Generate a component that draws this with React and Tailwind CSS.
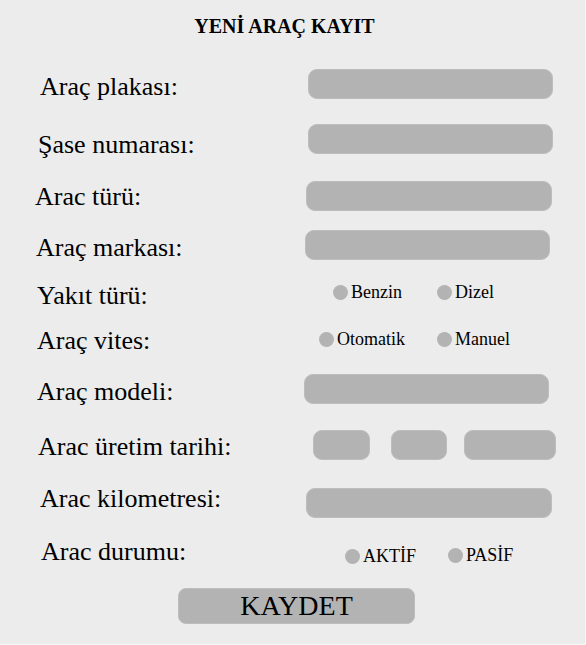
import React from "react";

const field = "h-[30px] shrink-0 rounded-[9px] border border-[#bdbdbd] bg-[#b3b3b3]";

function Row({ className = "", labelClass = "", label, children }) {
  return (
    <div className={`flex h-[30px] items-center ${className}`}>
      <div className={`shrink-0 whitespace-nowrap font-['Liberation_Serif',serif] text-[26px] leading-[30px] ${labelClass}`}>
        {label}
      </div>
      {children}
    </div>
  );
}

function Radio({ label, className = "" }) {
  return (
    <div className={`flex shrink-0 items-center gap-[3px] ${className}`}>
      <span className="h-[15px] w-[15px] shrink-0 rounded-full bg-[#b3b3b3]" />
      <span className="text-[18px] leading-[20px]">{label}</span>
    </div>
  );
}

export default function App() {
  return (
    <div className="flex h-[645px] w-[586px] flex-col overflow-hidden border-r border-b border-[#f6f6f6] bg-[#ececec] font-['Liberation_Serif',serif] text-black">
      <div className="flex h-[52px] shrink-0 items-center justify-center pr-[16px] text-[20px] font-bold">
        YENİ ARAÇ KAYIT
      </div>

      <Row className="mt-[17px]" labelClass="w-[308px] pl-[40px] mt-[6px]" label="Araç plakası:">
        <div className={`${field} w-[245px]`} />
      </Row>

      <Row className="mt-[25px]" labelClass="w-[308px] pl-[38px] mt-[12px]" label="Şase numarası:">
        <div className={`${field} w-[245px]`} />
      </Row>

      <Row className="mt-[27px]" labelClass="w-[306px] pl-[35px] mt-[2px]" label="Arac türü:">
        <div className={`${field} w-[246px]`} />
      </Row>

      <Row className="mt-[19px]" labelClass="w-[305px] pl-[36px] mt-[6px]" label="Araç markası:">
        <div className={`${field} w-[245px]`} />
      </Row>

      <Row className="mt-[17px]" labelClass="w-[333px] pl-[37px] mt-[7px]" label="Yakıt türü:">
        <Radio className="w-[104px]" label="Benzin" />
        <Radio label="Dizel" />
      </Row>

      <Row className="mt-[17px]" labelClass="w-[319px] pl-[37px] mt-[3px]" label="Araç vites:">
        <Radio className="w-[118px]" label="Otomatik" />
        <Radio label="Manuel" />
      </Row>

      <Row className="mt-[20px]" labelClass="w-[304px] pl-[37px] mt-[6px]" label="Araç modeli:">
        <div className={`${field} w-[245px]`} />
      </Row>

      <Row className="mt-[26px]" labelClass="w-[313px] pl-[38px] mt-[3px]" label="Arac üretim tarihi:">
        <div className={`${field} w-[57px]`} />
        <div className={`${field} ml-[21px] w-[56px]`} />
        <div className={`${field} ml-[17px] w-[92px]`} />
      </Row>

      <Row className="mt-[28px]" labelClass="w-[306px] pl-[40px] -mt-[8px]" label="Arac kilometresi:">
        <div className={`${field} w-[246px]`} />
      </Row>

      <Row className="mt-[23px]" labelClass="w-[345px] pl-[41px] -mt-[8px]" label="Arac durumu:">
        <Radio className="w-[103px]" label="AKTİF" />
        <Radio className="-mt-[2px]" label="PASİF" />
      </Row>

      <div className="mt-[17px] flex pl-[178px]">
        <button className="h-[36px] w-[237px] rounded-[8px] border border-[#bdbdbd] bg-[#b3b3b3] font-['Liberation_Serif',serif] text-[28px] leading-[34px]">
          KAYDET
        </button>
      </div>
    </div>
  );
}
